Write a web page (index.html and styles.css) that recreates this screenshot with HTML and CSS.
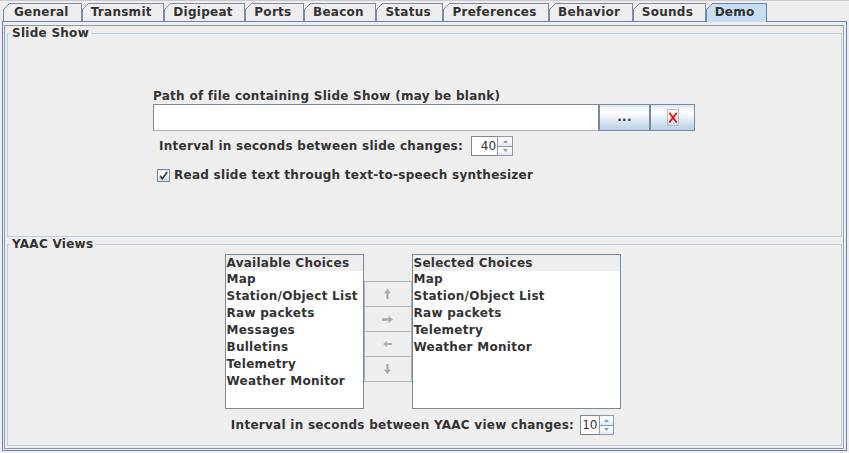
FILE: index.html
```html
<!DOCTYPE html>
<html>
<head>
<meta charset="utf-8">
<title>Demo</title>
<link rel="stylesheet" href="styles.css">
</head>
<body>
<div class="window">
  <div class="tabs">
    <div class="tab first">General</div>
    <div class="tab">Transmit</div>
    <div class="tab">Digipeat</div>
    <div class="tab">Ports</div>
    <div class="tab">Beacon</div>
    <div class="tab">Status</div>
    <div class="tab">Preferences</div>
    <div class="tab">Behavior</div>
    <div class="tab">Sounds</div>
    <div class="tab selected">Demo</div>
  </div>
  <div class="panel">
    <div class="inner">
      <fieldset class="group slide">
        <legend>Slide Show</legend>
        <div class="slide-body">
          <div class="form">
            <div class="label">Path of file containing Slide Show (may be blank)</div>
            <div class="file-row">
              <div class="textfield"></div>
              <button class="btn dots">...</button>
              <button class="btn clear">
                <svg width="12" height="17" viewBox="0 0 12 17"><rect x="0.5" y="0.5" width="11" height="16" fill="none" stroke="#b3c0cf"/><path d="M2.3 3.8 L9.7 13.4 M9.7 3.8 L2.3 13.4" stroke="#ff0000" stroke-width="1.7" fill="none"/></svg>
              </button>
            </div>
            <div class="interval-row">
              <span>Interval in seconds between slide changes:</span>
              <div class="spinner wide">
                <div class="spin-field right">40</div>
                <div class="spin-btns">
                  <div class="spin-btn"><svg width="5" height="3" viewBox="0 0 5 3"><path d="M2.5 0 L5 3 L0 3 Z" fill="#8a96a4"/></svg></div>
                  <div class="spin-btn"><svg width="5" height="3" viewBox="0 0 5 3"><path d="M0 0 L5 0 L2.5 3 Z" fill="#8a96a4"/></svg></div>
                </div>
              </div>
            </div>
            <div class="check-row">
              <span class="checkbox"><svg width="11" height="11" viewBox="0 0 11 11"><path d="M2.2 5.6 L4.2 8.8 L9.2 2" stroke="#333" stroke-width="1.6" fill="none"/></svg></span>
              <span>Read slide text through text-to-speech synthesizer</span>
            </div>
          </div>
        </div>
      </fieldset>
      <fieldset class="group views">
        <legend>YAAC Views</legend>
        <div class="views-body">
          <div class="lists">
            <div class="list avail">
              <div class="list-head">Available Choices</div>
              <div class="list-item">Map</div>
              <div class="list-item">Station/Object List</div>
              <div class="list-item">Raw packets</div>
              <div class="list-item">Messages</div>
              <div class="list-item">Bulletins</div>
              <div class="list-item">Telemetry</div>
              <div class="list-item">Weather Monitor</div>
            </div>
            <div class="arrows">
              <div class="arrow-btn"><svg width="7" height="10" viewBox="0 0 7 10"><path d="M3.5 0 L7 4.2 L4.6 4.2 L4.6 10 L2.4 10 L2.4 4.2 L0 4.2 Z" fill="#a8a8a8"/></svg></div>
              <div class="arrow-btn"><svg width="11" height="7" viewBox="0 0 11 7"><path d="M0 2.3 L6.5 2.3 L6.5 0 L11 3.5 L6.5 7 L6.5 4.7 L0 4.7 Z" fill="#a8a8a8"/></svg></div>
              <div class="arrow-btn"><svg width="9" height="6" viewBox="0 0 9 6"><path d="M9 2 L4 2 L4 0 L0 3 L4 6 L4 4 L9 4 Z" fill="#b0b0b0"/></svg></div>
              <div class="arrow-btn"><svg width="7" height="10" viewBox="0 0 7 10"><path d="M2.4 0 L4.6 0 L4.6 5.8 L7 5.8 L3.5 10 L0 5.8 L2.4 5.8 Z" fill="#a8a8a8"/></svg></div>
            </div>
            <div class="list sel">
              <div class="list-head">Selected Choices</div>
              <div class="list-item">Map</div>
              <div class="list-item">Station/Object List</div>
              <div class="list-item">Raw packets</div>
              <div class="list-item">Telemetry</div>
              <div class="list-item">Weather Monitor</div>
            </div>
          </div>
          <div class="views-interval">
            <span>Interval in seconds between YAAC view changes:</span>
            <div class="spinner narrow">
              <div class="spin-field">10</div>
              <div class="spin-btns">
                <div class="spin-btn"><svg width="5" height="3" viewBox="0 0 5 3"><path d="M2.5 0 L5 3 L0 3 Z" fill="#8a96a4"/></svg></div>
                <div class="spin-btn"><svg width="5" height="3" viewBox="0 0 5 3"><path d="M0 0 L5 0 L2.5 3 Z" fill="#8a96a4"/></svg></div>
              </div>
            </div>
          </div>
        </div>
      </fieldset>
    </div>
  </div>
</div>
</body>
</html>
```
FILE: styles.css
```css
html, body {
  margin: 0;
  padding: 0;
}
body {
  width: 849px;
  height: 453px;
  overflow: hidden;
  background: #eeeeee;
  font-family: "DejaVu Sans", "Liberation Sans", sans-serif;
  font-weight: bold;
  font-size: 12px;
  letter-spacing: 0.27px;
  color: #333333;
}
.window {
  height: 453px;
  box-sizing: border-box;
  border-top: 1px solid #cfc9c2;
  display: flex;
  flex-direction: column;
}

/* Tabs */
.tabs {
  display: flex;
  padding: 2px 0 0 3px;
  height: 18px;
  flex: none;
}
.tab {
  position: relative;
  height: 18px;
  box-sizing: border-box;
  border: 1px solid #7b8cab;
  border-bottom: none;
  padding: 0 11.5px 0 8px;
  line-height: 17px;
  white-space: nowrap;
  background: #eeeeee;
}
.tab.first {
  padding-left: 10px;
  padding-right: 12px;
}
.tab::before {
  content: "";
  position: absolute;
  left: -1px;
  top: -1px;
  width: 7px;
  height: 7px;
  background: linear-gradient(to bottom right, #eeeeee 0 43%, #7b8cab 43% 57%, transparent 57%);
}
.tab.selected {
  background: #c8ddf2;
  border-color: #6382bf;
  height: 19px;
  margin-bottom: -1px;
  z-index: 1;
}
.tab.selected::before {
  background: linear-gradient(to bottom right, #eeeeee 0 43%, #6382bf 43% 57%, transparent 57%);
}

/* Panel */
.panel {
  flex: 1;
  margin: 0 2px 2px 2px;
  border: 1px solid #6382bf;
  padding: 3px 2px 1px 1px;
  display: flex;
  min-height: 0;
}
.inner {
  flex: 1;
  border: 1px solid #8e9aab;
  border-right-color: #9aa6b6;
  padding: 0 1px 2px 2px;
  display: flex;
  flex-direction: column;
  min-height: 0;
}

fieldset.group {
  margin: 0;
  padding: 0;
  border: 1px solid #b8cfe5;
  min-width: 0;
  box-sizing: border-box;
}
fieldset.group legend {
  padding: 0 2px;
  margin-left: 2px;
  line-height: 14px;
}
.slide {
  height: 211px;
  flex: none;
}
.views {
  flex: 1;
  margin-top: 4px;
  min-height: 0;
}

/* Slide show */
.slide-body {
  display: flex;
  justify-content: center;
  padding-top: 49px;
}
.form {
  width: 543px;
  display: flex;
  flex-direction: column;
}
.label {
  line-height: 14px;
  height: 14px;
  white-space: nowrap;
}
.file-row {
  display: flex;
  margin-top: 1px;
  height: 27px;
}
.textfield {
  width: 446px;
  box-sizing: border-box;
  background: #ffffff;
  border: 1px solid #7a8a99;
  border-bottom-color: #a9b4c1;
}
.btn {
  box-sizing: border-box;
  height: 27px;
  margin: 0;
  padding: 0;
  border: 1px solid #7a8a99;
  background: linear-gradient(#dde8f3, #ffffff 30%, #b8cfe5);
  font: inherit;
  letter-spacing: inherit;
  color: #333333;
  display: flex;
  align-items: center;
  justify-content: center;
}
.btn.dots {
  width: 51px;
  padding-bottom: 2px;
}
.btn.clear {
  width: 45px;
}
.btn svg {
  display: block;
}

.interval-row {
  display: flex;
  align-items: center;
  height: 20px;
  margin-top: 5px;
  padding-left: 6px;
  line-height: 14px;
  white-space: nowrap;
}
.spinner {
  display: flex;
  height: 20px;
  margin-left: 8px;
}
.spin-field {
  box-sizing: border-box;
  background: #ffffff;
  border: 1px solid #7a8a99;
  border-right: none;
  border-bottom-color: #6f7f90;
  font-weight: normal;
  letter-spacing: 0;
  line-height: 18px;
  overflow: hidden;
  white-space: nowrap;
}
.spinner.wide .spin-field {
  width: 26px;
  text-align: right;
  padding-right: 1px;
}
.spinner.narrow {
  margin-left: 6px;
}
.spinner.narrow .spin-field {
  width: 19px;
  padding-left: 1px;
}
.spin-btns {
  display: flex;
  flex-direction: column;
}
.spinner.wide .spin-btns { width: 16px; }
.spinner.narrow .spin-btns { width: 15px; }
.spin-btn {
  flex: 1;
  box-sizing: border-box;
  border: 1px solid #8e9aab;
  background: linear-gradient(#f4f8fc, #ffffff 40%, #dbe6f1);
  display: flex;
  align-items: center;
  justify-content: center;
}
.spin-btn + .spin-btn {
  border-top: none;
}
.spin-btn svg {
  display: block;
}

.check-row {
  display: flex;
  align-items: center;
  height: 14px;
  margin-top: 12px;
  padding-left: 4px;
  line-height: 14px;
  white-space: nowrap;
}
.checkbox {
  width: 13px;
  height: 13px;
  box-sizing: border-box;
  border: 1px solid #7a8a99;
  background: linear-gradient(#dde8f3, #ffffff 35%, #c9daeb);
  margin-right: 4px;
  display: flex;
  align-items: center;
  justify-content: center;
}
.checkbox svg {
  display: block;
}

/* YAAC views */
.views-body {
  display: flex;
  flex-direction: column;
  align-items: center;
  padding-top: 3px;
  padding-right: 4px;
}
.lists {
  display: flex;
  align-items: center;
  height: 155px;
}
.list {
  box-sizing: border-box;
  height: 155px;
  border: 1px solid #7a8a99;
  background: #ffffff;
  overflow: hidden;
}
.list.avail { width: 139px; }
.list.sel { width: 209px; }
.list-head {
  height: 16px;
  line-height: 16px;
  background: #eeeeee;
  padding-left: 1px;
  white-space: nowrap;
}
.list-item {
  height: 17px;
  line-height: 17px;
  padding-left: 1px;
  white-space: nowrap;
}
.arrows {
  display: flex;
  flex-direction: column;
  width: 48px;
}
.arrow-btn {
  height: 26px;
  box-sizing: border-box;
  border: 1px solid #a8b0ba;
  background: #eeeeee;
  display: flex;
  align-items: center;
  justify-content: center;
}
.arrow-btn + .arrow-btn {
  margin-top: -1px;
}
.arrow-btn svg {
  display: block;
}
.views-interval {
  display: flex;
  align-items: center;
  height: 20px;
  margin-top: 6px;
  line-height: 14px;
  white-space: nowrap;
}
```
